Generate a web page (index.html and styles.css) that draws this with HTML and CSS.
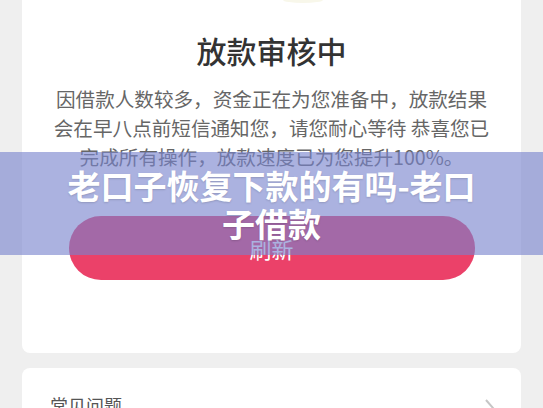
FILE: index.html
```html
<!DOCTYPE html>
<html lang="zh-CN">
<head>
<meta charset="utf-8">
<title>放款审核中</title>
<link rel="stylesheet" href="styles.css">
</head>
<body>
<div class="page">
  <section class="card status-card">
    <div class="status-icon"></div>
    <h1 class="status-title">放款审核中</h1>
    <p class="status-text">因借款人数较多，资金正在为您准备中，放款结果会在早八点前短信通知您，请您耐心等待 恭喜您已完成所有操作，放款速度已为您提升100%。</p>
    <button class="refresh-btn">刷新</button>
  </section>
  <section class="card faq-card">
    <span class="faq-label">常见问题</span>
    <svg class="chevron" width="10" height="18" viewBox="0 0 10 18"><polyline points="1,1 8,9 1,17" fill="none" stroke="#c6c6c6" stroke-width="2"/></svg>
  </section>
</div>
<div class="banner">
  <h2 class="banner-title">老口子恢复下款的有吗-老口子借款</h2>
</div>
</body>
</html>
```
FILE: styles.css
```css
* { box-sizing: border-box; }
html, body { margin: 0; padding: 0; }
body {
  background: #efefef;
  font-family: "Noto Sans CJK SC", "Noto Sans", sans-serif;
  overflow: hidden;
  height: 408px;
}
.page {
  padding: 0 22px;
  display: flex;
  flex-direction: column;
  gap: 15px;
}
.card {
  background: #fff;
  border-radius: 8px;
}
.status-card {
  border-radius: 0 0 8px 8px;
  display: flex;
  flex-direction: column;
  align-items: center;
  padding: 0 0 73px;
  height: 353px;
}
.status-icon {
  width: 40px;
  height: 3px;
  margin-left: 62px;
  border-radius: 0 0 20px 20px / 0 0 3px 3px;
  background: #f8f7ea;
}
.status-title {
  margin: 27px 0 0;
  font-size: 30px;
  line-height: 40px;
  font-weight: 500;
  color: #333;
}
.status-text {
  margin: 14px 0 0;
  width: 442px;
  font-size: 19.6px;
  line-height: 29px;
  text-align: center;
  color: #666;
}
.refresh-btn {
  margin-top: 45px;
  width: 406px;
  height: 64px;
  border: none;
  border-radius: 32px;
  background: #eb4169;
  color: #fff;
  font-family: inherit;
  font-size: 22px;
  line-height: 64px;
  padding: 0;
}
.faq-card {
  display: flex;
  justify-content: space-between;
  align-items: flex-start;
  padding: 25px 26px 20px 28px;
  height: 80px;
}
.faq-label {
  font-size: 18px;
  line-height: 24px;
  color: #555;
}
.chevron { margin-top: 6px; }
.banner {
  position: absolute;
  left: 0;
  right: 0;
  top: 152px;
  height: 103px;
  background: rgba(120, 130, 205, 0.62);
  display: flex;
  align-items: center;
  justify-content: center;
}
.banner-title {
  margin: 0;
  width: 440px;
  text-align: center;
  color: #fff;
  font-size: 33px;
  line-height: 38px;
  font-weight: 700;
  text-shadow: 0 1px 2px rgba(0, 0, 0, 0.15);
}
```
